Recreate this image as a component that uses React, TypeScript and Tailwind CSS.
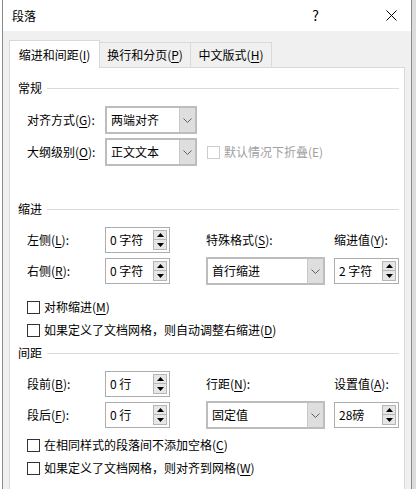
import React from 'react'

const font = { fontFamily: '"Noto Sans CJK SC", "Microsoft YaHei", sans-serif' }

// access-key letter, underlined as in Win32 dialogs
const K = ({ children }: { children: React.ReactNode }) => (
  <span className="underline underline-offset-2 decoration-[1px]">{children}</span>
)

const Chevron = () => (
  <svg width="9" height="5" viewBox="0 0 9 5" className="block">
    <path d="M0.5 0.5 L4.5 4.5 L8.5 0.5" fill="none" stroke="#606060" strokeWidth="1" />
  </svg>
)

const Tri = ({ down }: { down?: boolean }) => (
  <svg width="7" height="4" viewBox="0 0 7 4" className="block">
    <path d={down ? 'M0 0 L7 0 L3.5 4 Z' : 'M0 4 L7 4 L3.5 0 Z'} fill="#000" />
  </svg>
)

const Select = ({ value, width }: { value: string; width: string }) => (
  <div className={`${width} h-[28px] flex border-2 border-[#bdbdbd] bg-white`}>
    <div className="flex-1 flex items-center pl-[4px] text-[12px] text-black">{value}</div>
    <div className="w-[16px] flex items-center justify-center bg-[#dedede] border-l border-[#c8c8c8]">
      <Chevron />
    </div>
  </div>
)

const Spin = ({ value }: { value: string }) => (
  <div className="w-[65px] h-[26px] flex border border-[#adadad] bg-white">
    <div className="flex-1 flex items-center pl-[4px] text-[12px] text-black">{value}</div>
    <div className="flex flex-col py-[2px] pr-[2px]">
      <div className="w-[14px] h-[11px] flex items-center justify-center bg-[#e6e6e6] border border-[#b5b5b5]">
        <Tri />
      </div>
      <div className="w-[14px] h-[11px] flex items-center justify-center bg-[#e6e6e6] border border-[#b5b5b5] border-t-0">
        <Tri down />
      </div>
    </div>
  </div>
)

const Heading = ({ title, className }: { title: string; className: string }) => (
  <div className={`flex items-center h-[16px] pl-[8px] pr-[5px] ${className}`}>
    <span className="text-[12px] text-black">{title}</span>
    <div className="flex-1 h-px bg-[#dadada] ml-[5px]"></div>
  </div>
)

const Check = ({ children, className }: { children: React.ReactNode; className: string }) => (
  <div className={`flex items-center h-[16px] pl-[17px] ${className}`}>
    <div className="w-[13px] h-[13px] border border-[#333] bg-white"></div>
    <span className="ml-[4px] text-[12px] text-black">{children}</span>
  </div>
)

const Label = ({ children }: { children: React.ReactNode }) => (
  <div className="w-[78px] text-[12px] text-black">{children}</div>
)

export default function App() {
  return (
    <div className="w-[416px] h-[489px] flex bg-white overflow-hidden" style={font}>
      <div className="w-[2px] bg-white"></div>
      <div className="w-[410px] flex flex-col border-x border-[#8a8a8a]">
        {/* Title bar */}
        <div className="h-[31px] flex items-center bg-white">
          <span className="ml-[9px] text-[12px] text-black">段落</span>
          <span className="ml-auto mr-[67px] text-[14px] text-black">?</span>
          <svg width="11" height="11" viewBox="0 0 11 11" className="mr-[14px]">
            <path d="M0.5 0.5 L10.5 10.5 M10.5 0.5 L0.5 10.5" stroke="#000" strokeWidth="1" />
          </svg>
        </div>

        {/* Body */}
        <div className="flex-1 flex flex-col bg-[#f0f0f0] px-[6px] pt-[9px]">
          {/* Tabs */}
          <div className="flex items-end h-[27px]">
            <div className="w-[91px] h-[28px] -mb-px z-10 flex items-center justify-center bg-white border border-b-0 border-[#d9d9d9] text-[12px] text-black">
              缩进和间距(<K>I</K>)
            </div>
            <div className="w-[91px] h-[25px] flex items-center justify-center bg-[#f0f0f0] border border-l-0 border-b-0 border-[#d9d9d9] text-[12px] text-black">
              换行和分页(<K>P</K>)
            </div>
            <div className="w-[81px] h-[25px] flex items-center justify-center bg-[#f0f0f0] border border-l-0 border-b-0 border-[#d9d9d9] text-[12px] text-black">
              中文版式(<K>H</K>)
            </div>
          </div>

          {/* Panel */}
          <div className="flex-1 flex flex-col bg-white border border-b-0 border-[#d9d9d9]">
            <Heading title="常规" className="mt-[12px]" />

            <div className="flex items-center h-[28px] mt-[10px] pl-[17px]">
              <Label>对齐方式(<K>G</K>):</Label>
              <Select value="两端对齐" width="w-[92px]" />
            </div>

            <div className="flex items-center h-[28px] mt-[4px] pl-[17px]">
              <Label>大纲级别(<K>O</K>):</Label>
              <Select value="正文文本" width="w-[92px]" />
              <div className="ml-[10px] w-[13px] h-[13px] border border-[#cccccc] bg-white"></div>
              <span className="ml-[4px] text-[12px] text-[#a0a0a0]">默认情况下折叠(E)</span>
            </div>

            <Heading title="缩进" className="mt-[35px]" />

            <div className="flex items-center h-[26px] mt-[10px] pl-[17px]">
              <Label>左侧(<K>L</K>):</Label>
              <div className="w-[101px]">
                <Spin value="0 字符" />
              </div>
              <div className="w-[128px] text-[12px] text-black">特殊格式(<K>S</K>):</div>
              <div className="text-[12px] text-black">缩进值(<K>Y</K>):</div>
            </div>

            <div className="flex items-center h-[28px] mt-[4px] pl-[17px]">
              <Label>右侧(<K>R</K>):</Label>
              <div className="w-[101px]">
                <Spin value="0 字符" />
              </div>
              <div className="w-[128px]">
                <Select value="首行缩进" width="w-[119px]" />
              </div>
              <Spin value="2 字符" />
            </div>

            <Check className="mt-[14px]">
              对称缩进(<K>M</K>)
            </Check>
            <Check className="mt-[7px]">
              如果定义了文档网格，则自动调整右缩进(<K>D</K>)
            </Check>

            <Heading title="间距" className="mt-[7px]" />

            <div className="flex items-center h-[26px] mt-[10px] pl-[17px]">
              <Label>段前(<K>B</K>):</Label>
              <div className="w-[101px]">
                <Spin value="0 行" />
              </div>
              <div className="w-[128px] text-[12px] text-black">行距(<K>N</K>):</div>
              <div className="text-[12px] text-black">设置值(<K>A</K>):</div>
            </div>

            <div className="flex items-center h-[28px] mt-[4px] pl-[17px]">
              <Label>段后(<K>F</K>):</Label>
              <div className="w-[101px]">
                <Spin value="0 行" />
              </div>
              <div className="w-[128px]">
                <Select value="固定值" width="w-[119px]" />
              </div>
              <Spin value="28磅" />
            </div>

            <Check className="mt-[8px]">
              在相同样式的段落间不添加空格(<K>C</K>)
            </Check>
            <Check className="mt-[7px]">
              如果定义了文档网格，则对齐到网格(<K>W</K>)
            </Check>
          </div>
        </div>
      </div>
      <div className="flex-1 bg-[#dcdcdc]"></div>
    </div>
  )
}
